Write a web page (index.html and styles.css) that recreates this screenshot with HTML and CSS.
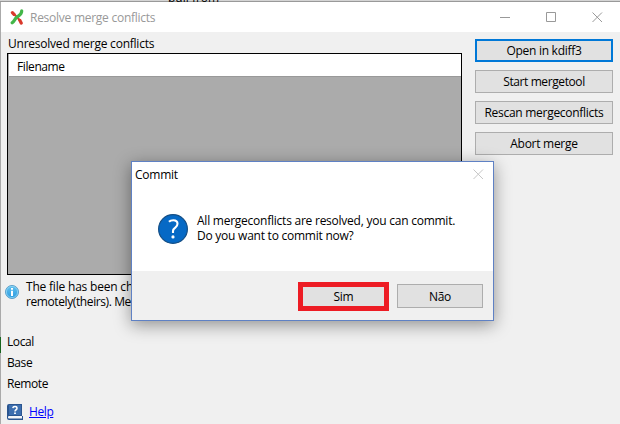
FILE: index.html
```
<!DOCTYPE html>
<html lang="en">
<head>
<meta charset="utf-8">
<title>Resolve merge conflicts</title>
<link rel="stylesheet" href="styles.css">
</head>
<body>
<div class="desktop">
  <div class="backdrop"><span class="backdrop-text">pull from</span></div>
  <main class="window">
    <header class="titlebar">
      <svg class="logo" width="14" height="16" viewBox="0 0 14 16">
        <path d="M2.4 3.6 4 5.3M9.8 11.3 11.2 14" stroke="#d9392c" stroke-width="3.2" stroke-linecap="round"/>
        <path d="M4 5 10 11.5" stroke="#d9392c" stroke-width="2" />
        <path d="M11.7 1.8C11.8 5.5 9 6.4 7 8 4.7 9.8 4.6 12 2.2 13.8" fill="none" stroke="#43b649" stroke-width="3.2" stroke-linecap="round"/>
      </svg>
      <h1 class="title">Resolve merge conflicts</h1>
      <div class="controls">
        <svg width="11" height="11" viewBox="0 0 11 11"><path d="M0 5.5H10" stroke="#999"/></svg>
        <svg width="11" height="11" viewBox="0 0 11 11"><path d="M.5 .5h9v9h-9z" fill="none" stroke="#999"/></svg>
        <svg width="11" height="11" viewBox="0 0 11 11"><path d="M.5 .5 10 10M10 .5.5 10" stroke="#999"/></svg>
      </div>
    </header>
    <div class="content">
      <section class="left">
        <div class="label">Unresolved merge conflicts</div>
        <div class="grid"><div class="grid-head">Filename</div></div>
        <div class="info">
          <svg width="14" height="14" viewBox="0 0 14 14">
            <defs><linearGradient id="sky" x2="0" y2="1"><stop stop-color="#63c1ee"/><stop offset="1" stop-color="#2b9be0"/></linearGradient></defs>
            <circle cx="7" cy="7" r="6.5" fill="url(#sky)" stroke="#5d9fc8"/>
            <circle cx="7" cy="7" r="5.6" fill="none" stroke="#9cdcf8" stroke-width=".7"/>
            <path d="M6 3h2v1.7H6zM6 5.7h2V11H6z" fill="#fff"/>
          </svg>
          <p><span class="changed">The file has been ch</span><br>remotely(theirs). Me</p>
        </div>
        <ul class="sides"><li>Local</li><li>Base</li><li>Remote</li></ul>
        <div class="help">
          <svg width="16" height="16" viewBox="0 0 16 16">
            <path d="M2 0H15V12H16V16H2Q0 16 0 14V2Q0 0 2 0Z" fill="#2a5590"/>
            <path d="M2 1H14V11H2Z" fill="#3c6eaf"/>
            <path d="M2 12H15V14.5H2Q1 14.5 1 13.2 1 12 2 12Z" fill="#f3f5f8"/>
            <path d="M5.8 4.1Q6 2.5 8 2.5 10 2.5 10 4.2 10 5.3 8.8 6 8 6.5 8 7.5" fill="none" stroke="#fff" stroke-width="1.5"/>
            <path d="M7.1 8.5h1.8v1.6H7.1z" fill="#fff"/>
          </svg>
          <a class="help-link" href="#">Help</a>
        </div>
      </section>
      <aside class="actions">
        <button class="button focused">Open in kdiff3</button>
        <button class="button tight">Start mergetool</button>
        <button class="button">Rescan mergeconflicts</button>
        <button class="button">Abort merge</button>
      </aside>
    </div>
  </main>
  <div class="dialog" role="dialog">
    <div class="dialog-title"><span>Commit</span>
      <svg width="11" height="11" viewBox="0 0 11 11"><path d="M.5 .5 10 10M10 .5.5 10" stroke="#c6c6c6"/></svg>
    </div>
    <div class="dialog-body">
      <svg width="30" height="30" viewBox="0 0 30 30">
        <circle cx="15" cy="15" r="14.4" fill="#0669c5" stroke="#164f85" stroke-width="1.2"/>
        <path d="M11 7.8Q12.5 6.2 15.3 6.2 19.5 6.2 19.5 9.8 19.5 11.8 17.5 13.4 15 15.3 15 17V19" fill="none" stroke="#fff" stroke-width="2.1"/>
        <circle cx="15" cy="22.9" r="1.6" fill="#fff"/>
      </svg>
      <p>All mergeconflicts are resolved, you can commit.<br>Do you want to commit now?</p>
    </div>
    <div class="dialog-foot">
      <div class="highlight"><button class="choice">Sim</button></div>
      <button class="choice outlined">Não</button>
    </div>
  </div>
</div>
</body>
</html>
```

FILE: styles.css
```
* { box-sizing: border-box; }
body { margin: 0; font: 12px/15px "Open Sans", "Noto Sans", sans-serif; letter-spacing: -.4px; color: #000; }
p, h1, ul { margin: 0; padding: 0; font: inherit; }
ul { list-style: none; }
svg { display: block; flex: none; }
.desktop { position: relative; width: 620px; height: 424px; overflow: hidden; background: linear-gradient(#aaa 0 337px, #17651e 337px 353px, #aaa 353px); }
.backdrop { height: 2px; overflow: hidden; background: linear-gradient(#d4d4d4 50%, #999 50%); }
.backdrop-text { display: block; margin: -10px 0 0 168px; letter-spacing: 0; }
.window { margin-left: 1px; height: 422px; background: #f0f0f0; }
.titlebar { height: 30px; background: #fff; display: flex; align-items: center; padding: 0 17px 0 9px; color: #999; }
.title { margin-left: 6px; letter-spacing: -.26px; }
.controls { margin-left: auto; display: flex; gap: 35px; }
.content { display: flex; gap: 13px; padding: 0 7px 0 6px; }
.left { width: 455px; padding-top: 4px; }
.label { height: 17px; padding-left: 1px; letter-spacing: -.23px; }
.grid { height: 222px; border: 1px solid #000; background: #ababab; }
.grid-head { height: 23px; margin-left: 1px; padding: 5px 8px; background: #fff; border-bottom: 1px solid #999; }
.info { display: flex; gap: 7px; height: 59px; padding-top: 4px; margin-left: -2px; }
.info svg { margin-top: 6px; }
.changed { letter-spacing: -.2px; }
.sides li { height: 21px; }
.help { display: flex; gap: 6px; margin-top: 7px; }
.help-link { color: #00f; text-decoration: underline; }
.actions { width: 138px; padding-top: 7px; display: flex; flex-direction: column; gap: 8px; }
.button, .choice { height: 23px; padding: 0; border: 1px solid #adadad; border-radius: 0; background: #e1e1e1; color: #000; font: inherit; letter-spacing: -.28px; }
.button.focused { border: 2px solid #0078d7; }
.button.tight { letter-spacing: -.4px; }
.dialog { position: absolute; left: 131px; top: 161px; width: 363px; height: 160px; background: #fff; border: 1px solid #5f81c4; box-shadow: 0 4px 16px rgba(0,0,0,.4); display: flex; flex-direction: column; letter-spacing: -.24px; }
.dialog-title { display: flex; justify-content: space-between; padding: 5px 9px 0 3px; height: 51px; }
.dialog-title svg { margin-top: 2px; }
.dialog-body { display: flex; gap: 9px; padding-left: 26px; flex: 1; }
.dialog-body svg { margin-top: 1px; }
.dialog-foot { height: 49px; background: #f0f0f0; display: flex; justify-content: flex-end; align-items: flex-start; gap: 8px; padding: 11px 10px 0 0; }
.highlight { width: 91px; height: 29px; border: 5px solid #ed1c24; display: flex; }
.choice { width: 86px; height: 24px; }
.highlight .choice { width: 81px; height: 19px; border: 0; }
.choice.outlined { margin-top: 2px; }
```
